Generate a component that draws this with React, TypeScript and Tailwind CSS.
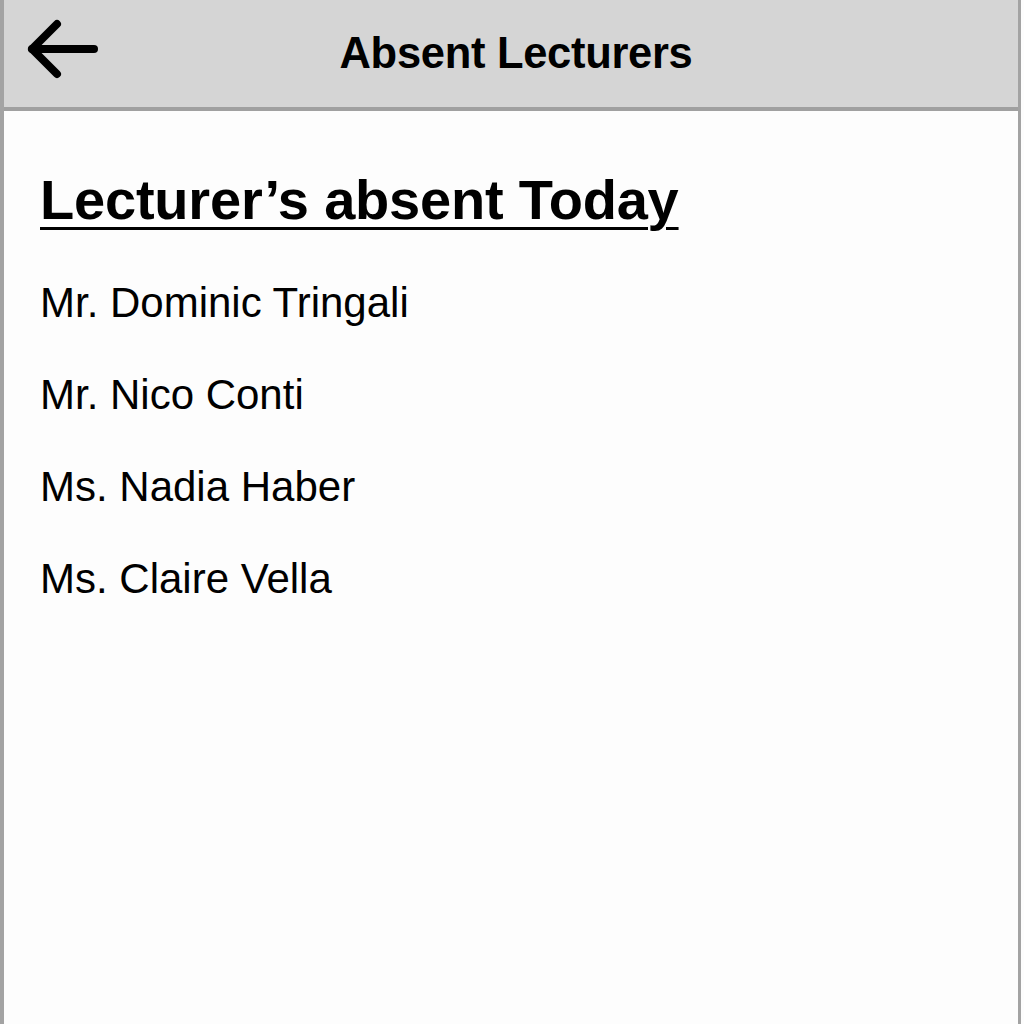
import React from 'react';

const lecturers = ['Mr. Dominic Tringali', 'Mr. Nico Conti', 'Ms. Nadia Haber', 'Ms. Claire Vella'];

const App: React.FC = () => {
  return (
    <div className="h-[1024px] w-[1024px] bg-[#fdfdfd] font-['Liberation_Sans',Arial,sans-serif] text-black">
      <div className="flex h-full w-[1021px] flex-col border-l-4 border-r-[3px] border-[#a3a3a3]">
        <header className="relative flex h-[111px] items-center justify-center border-b-4 border-[#a0a0a0] bg-[#d5d5d5]">
          <button className="absolute left-[20px] top-[17px] flex h-[64px] w-[76px] items-center justify-center">
            <svg width="72" height="62" viewBox="0 0 72 62" fill="none" stroke="#000" strokeWidth="8" strokeLinecap="round" strokeLinejoin="round">
              <path d="M68 31H6" />
              <path d="M31 6L6 31l25 25" />
            </svg>
          </button>
          <h1 className="ml-[10px] text-[43.5px] font-bold tracking-[-0.3px]">Absent Lecturers</h1>
        </header>
        <main className="flex flex-col px-[36px] pt-[61px]">
          <h2 className="text-[56px] font-bold leading-none tracking-[-0.2px] underline decoration-[3px] underline-offset-[8px]">Lecturer’s absent Today</h2>
          <ul className="mt-[52px] flex flex-col gap-[46px]">
            {lecturers.map((name) => (
              <li key={name} className="text-[42px] leading-[46px]">{name}</li>
            ))}
          </ul>
        </main>
      </div>
    </div>
  );
};

export default App;
